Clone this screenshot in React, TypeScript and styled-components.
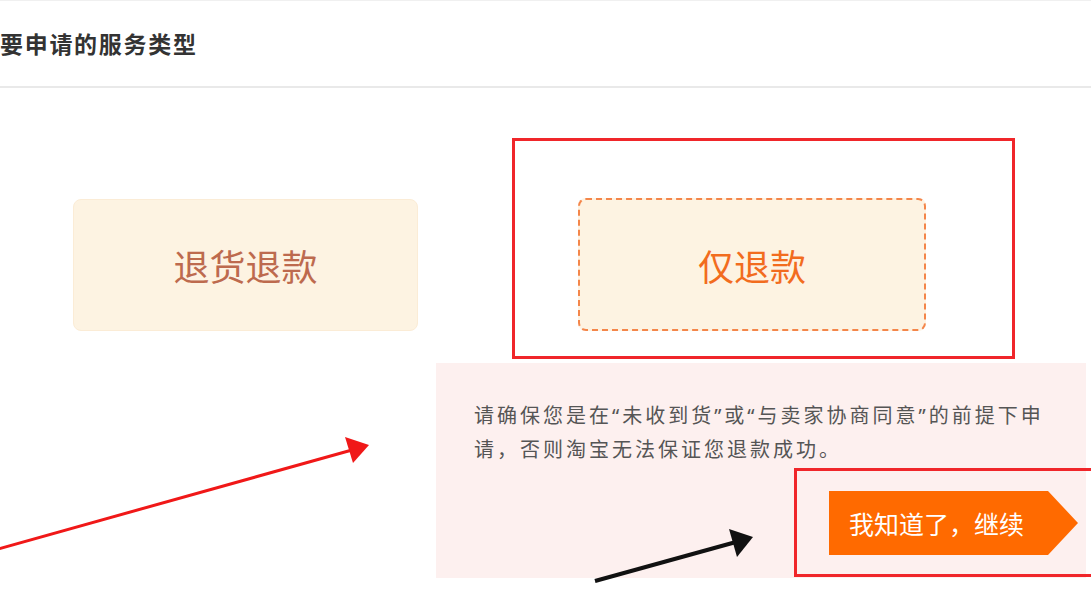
import React from 'react'
import styled, {createGlobalStyle} from 'styled-components'

const GlobalStyle = createGlobalStyle`
  html, body {
    margin: 0;
    padding: 0;
    background: #fff;
    overflow: hidden;
  }
  body {
    font-family: "Noto Sans CJK SC", "Noto Sans", "Liberation Sans", sans-serif;
  }
`

const Page = styled.div`
  position: relative;
  width: 1091px;
  height: 595px;
  overflow: hidden;
  border-top: 1px solid #f0f0f0;
  box-sizing: border-box;
`

const Header = styled.div`
  height: 87px;
  display: flex;
  align-items: center;
  border-bottom: 2px solid #e9e9e9;
  box-sizing: border-box;
  padding-bottom: 2px;
`

const Title = styled.h2`
  margin: 0;
  font-size: 23px;
  font-weight: 700;
  color: #333;
  letter-spacing: 1.7px;
`

const Choices = styled.div`
  display: flex;
  align-items: flex-start;
  gap: 94px;
  padding: 50px 0 0 73px;
`

interface ICardProps {
  active?: boolean
}

const Card = styled.div<ICardProps>`
  width: ${props => props.active ? '348px' : '345px'};
  height: ${props => props.active ? '133px' : '132px'};
  margin-top: ${props => props.active ? '0' : '61px'};
  box-sizing: border-box;
  display: flex;
  align-items: center;
  justify-content: center;
  background: #fdf3e2;
  border-radius: 8px;
  border: ${props => props.active ? '2px dashed #f4864a' : '1px solid #fbecd6'};
  font-size: 36px;
  color: ${props => props.active ? '#f26c1e' : '#bd6a4e'};
  cursor: pointer;
`

const Highlight = styled.div`
  width: 503px;
  height: 221px;
  box-sizing: border-box;
  border: 3px solid #f0262a;
  padding: 57px 0 0 63px;
`

const Notice = styled.div`
  margin: 4px 0 0 436px;
  width: 650px;
  height: 215px;
  box-sizing: border-box;
  background: #fdf0ef;
  padding: 36px 0 0 38px;
`

const NoticeText = styled.p`
  margin: 0;
  width: 585px;
  font-family: "Noto Sans", "Noto Sans CJK SC", sans-serif;
  font-size: 20px;
  line-height: 34px;
  letter-spacing: 3px;
  color: #555;
`

const ButtonFrame = styled.div`
  margin: 1px 0 0 320px;
  width: 320px;
  height: 109px;
  box-sizing: border-box;
  border: 3px solid #f0262a;
  padding: 20px 0 0 32px;
`

const ContinueButton = styled.button`
  width: 249px;
  height: 64px;
  border: none;
  padding: 0 0 0 20px;
  text-align: left;
  background: #ff6a00;
  color: #fff;
  font-family: inherit;
  font-size: 25px;
  clip-path: polygon(0 0, 219px 0, 100% 50%, 219px 100%, 0 100%);
  cursor: pointer;
`

const Annotations = styled.svg`
  position: absolute;
  left: 0;
  top: 0;
  pointer-events: none;
`

const App: React.FC = () => {
  return (
    <Page>
      <GlobalStyle />
      <Header>
        <Title>要申请的服务类型</Title>
      </Header>
      <Choices>
        <Card>退货退款</Card>
        <Highlight>
          <Card active>仅退款</Card>
        </Highlight>
      </Choices>
      <Notice>
        <NoticeText>请确保您是在“未收到货”或“与卖家协商同意”的前提下申请，否则淘宝无法保证您退款成功。</NoticeText>
        <ButtonFrame>
          <ContinueButton>我知道了，继续</ContinueButton>
        </ButtonFrame>
      </Notice>
      <Annotations width="1091" height="595" viewBox="0 0 1091 595">
        <line x1="-2" y1="548" x2="352" y2="449" stroke="#f01818" strokeWidth="3" />
        <polygon points="369,444 345,436 353,462" fill="#f01818" />
        <line x1="595" y1="580" x2="736" y2="541" stroke="#111" strokeWidth="4" />
        <polygon points="753,536 729,528 737,556" fill="#111" />
      </Annotations>
    </Page>
  )
}

export default App
